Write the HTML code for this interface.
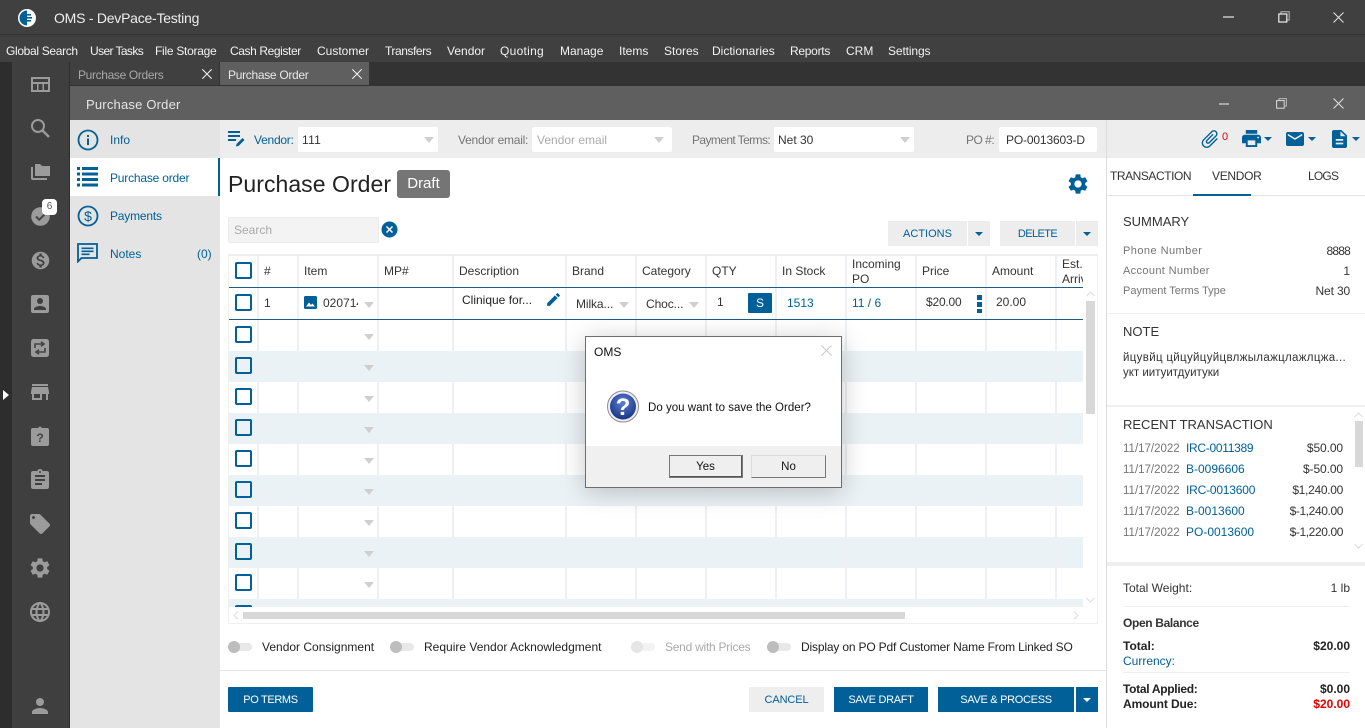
<!DOCTYPE html>
<html><head><meta charset="utf-8"><style>
html,body{margin:0;padding:0;width:1365px;height:728px;overflow:hidden;background:#fff}
body{position:relative;font-family:"Liberation Sans","Noto Sans CJK SC",sans-serif;font-size:12px;color:#333}
.b,.t,svg.i{position:absolute}
.t{white-space:nowrap;line-height:16px}
.bl{color:#006097}
.g{color:#757575}
.r{text-align:right}
.m{color:#f2f2f2;top:43px}
.ck{position:absolute;left:235px;width:13px;height:13px;border:2.5px solid #006097;border-radius:2px;background:transparent}
.car{position:absolute;width:0;height:0;border-left:5px solid transparent;border-right:5px solid transparent;border-top:6px solid #cfcfcf;margin:1px 0 0 1px}
.wc{position:absolute;width:0;height:0;border-left:4px solid transparent;border-right:4px solid transparent;border-top:4px solid #fff}
.bc{position:absolute;width:0;height:0;border-left:4px solid transparent;border-right:4px solid transparent;border-top:4px solid #006097}
.st{position:absolute;left:229px;width:854px;height:31px;background:#ebf2f6}
.cl{position:absolute;top:255px;width:2px;height:352px;background:#edf1f3}
.tr{position:absolute;height:8px;width:19px;background:#e8e8e8;border-radius:4px}
.kn{position:absolute;width:12px;height:12px;border-radius:6px;background:#bdbdbd}
.sb{fill:#9b9b9b}
.btn{line-height:26px;text-align:center;font-size:11px}
</style></head><body>
<svg width="0" height="0" style="position:absolute"><defs>
<symbol id="dollar" viewBox="0 0 24 24"><path d="M12 2C6.48 2 2 6.48 2 12s4.48 10 10 10 10-4.48 10-10S17.52 2 12 2zm1.41 16.09V20h-2.67v-1.93c-1.71-.36-3.16-1.46-3.27-3.4h1.96c.1 1.05.82 1.87 2.65 1.87 1.96 0 2.4-.98 2.4-1.59 0-.83-.44-1.61-2.67-2.14-2.48-.6-4.18-1.62-4.18-3.67 0-1.72 1.39-2.84 3.11-3.21V4h2.67v1.95c1.86.45 2.79 1.86 2.85 3.39H14.3c-.05-1.11-.64-1.87-2.22-1.87-1.5 0-2.4.68-2.4 1.64 0 .84.65 1.39 2.67 1.91s4.18 1.39 4.18 3.91c-.01 1.83-1.38 2.83-3.12 3.16z"/></symbol>
<symbol id="gear" viewBox="0 0 24 24"><path d="M19.14 12.94c.04-.3.06-.61.06-.94 0-.32-.02-.64-.07-.94l2.03-1.58c.18-.14.23-.41.12-.61l-1.92-3.32c-.12-.22-.37-.29-.59-.22l-2.39.96c-.5-.38-1.03-.7-1.62-.94l-.36-2.54c-.04-.24-.24-.41-.48-.41h-3.84c-.24 0-.43.17-.47.41l-.36 2.54c-.59.24-1.13.57-1.62.94l-2.39-.96c-.22-.08-.47 0-.59.22L2.74 8.87c-.12.21-.08.47.12.61l2.03 1.58c-.05.3-.09.63-.09.94s.02.64.07.94l-2.03 1.58c-.18.14-.23.41-.12.61l1.92 3.32c.12.22.37.29.59.22l2.39-.96c.5.38 1.03.7 1.62.94l.36 2.54c.05.24.24.41.48.41h3.84c.24 0 .44-.17.47-.41l.36-2.54c.59-.24 1.13-.56 1.62-.94l2.39.96c.22.08.47 0 .59-.22l1.92-3.32c.12-.22.07-.47-.12-.61l-2.01-1.58zM12 15.6c-1.98 0-3.6-1.62-3.6-3.6s1.62-3.6 3.6-3.6 3.6 1.62 3.6 3.6-1.62 3.6-3.6 3.6z"/></symbol>
<symbol id="edit" viewBox="0 0 24 24"><path d="M3 17.25V21h3.75L17.81 9.94l-3.75-3.75L3 17.25zM20.71 7.04c.39-.39.39-1.02 0-1.41l-2.34-2.34c-.39-.39-1.02-.39-1.41 0l-1.83 1.83 3.75 3.75 1.83-1.83z"/></symbol>
</defs></svg>

<!-- chrome -->
<div class="b" style="left:0;top:0;width:1365px;height:62px;background:#404040"></div>
<div class="b" style="left:0;top:34px;width:1365px;height:1px;background:#353535"></div>
<div class="b" style="left:0;top:62px;width:1365px;height:24px;background:#333"></div>
<div class="b" style="left:0;top:62px;width:12px;height:666px;background:#2d2d2d"></div>
<div class="b" style="left:12px;top:62px;width:57px;height:666px;background:#3f3f3f"></div>
<div class="b" style="left:69px;top:62px;width:1px;height:666px;background:#2e2e2e"></div>
<svg class="i" style="left:18px;top:9px" width="18" height="18" viewBox="0 0 18 18"><circle cx="9" cy="9" r="9" fill="#fff"/><path d="M9 1.5A7.5 7.5 0 0 0 9 16.5Z" fill="#006097"/><rect x="6" y="5" width="7" height="1.6" fill="#006097"/><rect x="5" y="8" width="9" height="1.6" fill="#006097"/><rect x="6" y="11" width="7" height="1.6" fill="#006097"/></svg>
<div class="t" style="left:54px;top:10px;font-size:14px;color:#eee;letter-spacing:-.24px">OMS - DevPace-Testing</div>
<div class="b" style="left:1223px;top:16px;width:11px;height:2px;background:#a5a5a5"></div>
<svg class="i" style="left:1278px;top:11px" width="12" height="12" viewBox="0 0 12 12" fill="none"><path d="M3 2.5V.8h8.2V9H9" stroke="#bbb"/><rect x=".8" y="3" width="8" height="8" stroke="#eee" stroke-width="1.2"/></svg>
<svg class="i" style="left:1333px;top:12px" width="11" height="11" viewBox="0 0 11 11"><path d="M.5.5l10 10M10.5.5l-10 10" stroke="#ddd" stroke-width="1.1"/></svg>
<div class="t m" style="left:6px;letter-spacing:-.33px">Global Search</div>
<div class="t m" style="left:90px;letter-spacing:-.6px">User Tasks</div>
<div class="t m" style="left:155px;letter-spacing:-.27px">File Storage</div>
<div class="t m" style="left:230px;letter-spacing:-.4px">Cash Register</div>
<div class="t m" style="left:317px">Customer</div>
<div class="t m" style="left:385px;letter-spacing:-.45px">Transfers</div>
<div class="t m" style="left:447px">Vendor</div>
<div class="t m" style="left:500px;letter-spacing:.28px">Quoting</div>
<div class="t m" style="left:560px">Manage</div>
<div class="t m" style="left:619px">Items</div>
<div class="t m" style="left:664px">Stores</div>
<div class="t m" style="left:712px">Dictionaries</div>
<div class="t m" style="left:790px;letter-spacing:-.28px">Reports</div>
<div class="t m" style="left:846px">CRM</div>
<div class="t m" style="left:888px;letter-spacing:-.12px">Settings</div>

<!-- tabs -->
<div class="b" style="left:70px;top:62px;width:149px;height:23px;background:#404040"></div>
<div class="b" style="left:220px;top:62px;width:149px;height:23px;background:#5f5f5f"></div>
<div class="t" style="left:78px;top:67px;color:#a8a8a8;letter-spacing:-.35px">Purchase Orders</div>
<div class="t" style="left:228px;top:67px;color:#e8e8e8;letter-spacing:-.3px">Purchase Order</div>
<svg class="i" style="left:202px;top:69px" width="10" height="10" viewBox="0 0 10 10"><path d="M.3.3l9.4 9.4M9.7.3L.3 9.7" stroke="#eee" stroke-width="1.1"/></svg>
<svg class="i" style="left:352px;top:69px" width="10" height="10" viewBox="0 0 10 10"><path d="M.3.3l9.4 9.4M9.7.3L.3 9.7" stroke="#eee" stroke-width="1.1"/></svg>
<div class="b" style="left:70px;top:86px;width:1295px;height:34px;background:#5f5f5f"></div>
<div class="t" style="left:86px;top:97px;font-size:13px;color:#e6e6e6;letter-spacing:.2px">Purchase Order</div>
<div class="b" style="left:1219px;top:103px;width:10px;height:1.5px;background:#a8a8a8"></div>
<svg class="i" style="left:1276px;top:98px" width="11" height="11" viewBox="0 0 11 11" fill="none"><path d="M3 2V.6h7.4V8H9" stroke="#bbb"/><rect x=".6" y="2.6" width="7.6" height="7.6" stroke="#ddd"/></svg>
<svg class="i" style="left:1333px;top:98px" width="11" height="11" viewBox="0 0 11 11"><path d="M.5.5l10 10M10.5.5l-10 10" stroke="#ddd" stroke-width="1.1"/></svg>

<!-- sidebar icons -->
<svg class="i sb" style="left:31px;top:77px" width="19" height="15" viewBox="0 0 19 15"><path fill-rule="evenodd" d="M0 0h19v15H0zM2 2v3h15V2zM2 7v6h4V7zM7.5 7v6h4V7zM13 7v6h4V7z"/></svg>
<svg class="i sb" style="left:30px;top:118px" width="22" height="20" viewBox="0 0 22 20"><circle cx="8" cy="8" r="6" fill="none" stroke="#9b9b9b" stroke-width="2"/><path d="M12.5 12.5l6.5 6.5" stroke="#9b9b9b" stroke-width="2.4"/></svg>
<svg class="i sb" style="left:31px;top:164px" width="19" height="16" viewBox="0 0 19 16"><path d="M4 0h5l2 2h8v10H4zM0 3h2v11h14v2H2q-2 0-2-2z"/></svg>
<svg class="i" style="left:31px;top:207px" width="19" height="19" viewBox="0 0 19 19"><circle cx="9.5" cy="9.5" r="9.3" fill="#9b9b9b"/><path d="M5 9.5l3.2 3.2L14 7" fill="none" stroke="#444" stroke-width="2"/></svg>
<div class="b" style="left:42px;top:199px;width:15px;height:16px;background:#fff;border-radius:4px;color:#555;font-size:10px;line-height:16px;text-align:center">6</div>
<svg class="i sb" style="left:30px;top:250px" width="21" height="21" viewBox="0 0 24 24"><use href="#dollar"/></svg>
<svg class="i sb" style="left:28px;top:292px" width="24" height="24" viewBox="0 0 24 24"><path d="M3 5v14c0 1.1.89 2 2 2h14c1.1 0 2-.9 2-2V5c0-1.1-.9-2-2-2H5c-1.11 0-2 .9-2 2zm12 4c0 1.66-1.34 3-3 3s-3-1.34-3-3 1.34-3 3-3 3 1.34 3 3zm-9 8c0-2 4-3.1 6-3.1s6 1.1 6 3.1v1H6v-1z"/></svg>
<svg class="i" style="left:31px;top:339px" width="18" height="18" viewBox="0 0 18 18"><rect width="18" height="18" rx="2.5" fill="#9b9b9b"/><path d="M4 9V5h8M10 2.8l3 2.2-3 2.2M14 9v4H6M8 15.2L5 13l3-2.2" fill="none" stroke="#444" stroke-width="1.6"/></svg>
<svg class="i sb" style="left:28px;top:380px" width="24" height="24" viewBox="0 0 24 24"><path d="M20 4H4v2h16V4zm1 10v-2l-1-5H4l-1 5v2h1v6h10v-6h4v6h2v-6h1zm-9 4H6v-4h6v4z"/></svg>
<svg class="i" style="left:31px;top:425px" width="18" height="21" viewBox="0 0 18 21"><path d="M2 3h5q2-3 4 0h5q2 0 2 2v14q0 2-2 2H2q-2 0-2-2V5q0-2 2-2z" fill="#9b9b9b"/><text x="9" y="17" font-size="12" font-weight="bold" text-anchor="middle" fill="#444" font-family="Liberation Sans">?</text></svg>
<svg class="i sb" style="left:28px;top:468px" width="24" height="24" viewBox="0 0 24 24"><path d="M19 3h-4.18C14.4 1.84 13.3 1 12 1c-1.3 0-2.4.84-2.82 2H5c-1.1 0-2 .9-2 2v14c0 1.1.9 2 2 2h14c1.1 0 2-.9 2-2V5c0-1.1-.9-2-2-2zm-7 0c.55 0 1 .45 1 1s-.45 1-1 1-1-.45-1-1 .45-1 1-1zm2 14H7v-2h7v2zm3-4H7v-2h10v2zm0-4H7V7h10v2z"/></svg>
<svg class="i sb" style="left:28px;top:512px" width="24" height="24" viewBox="0 0 24 24"><path d="M21.41 11.58l-9-9C12.05 2.22 11.55 2 11 2H4c-1.1 0-2 .9-2 2v7c0 .55.22 1.05.59 1.42l9 9c.36.36.86.58 1.41.58.55 0 1.05-.22 1.41-.59l7-7c.37-.36.59-.86.59-1.41 0-.55-.23-1.06-.59-1.42zM5.5 7C4.67 7 4 6.33 4 5.5S4.67 4 5.5 4 7 4.67 7 5.5 6.33 7 5.5 7z"/></svg>
<svg class="i sb" style="left:28px;top:556px" width="24" height="24"><use href="#gear"/></svg>
<svg class="i sb" style="left:28px;top:600px" width="24" height="24" viewBox="0 0 24 24"><path d="M11.99 2C6.47 2 2 6.48 2 12s4.47 10 9.99 10C17.52 22 22 17.52 22 12S17.52 2 11.99 2zm6.93 6h-2.95c-.32-1.25-.78-2.45-1.38-3.56 1.84.63 3.37 1.91 4.33 3.56zM12 4.04c.83 1.2 1.48 2.53 1.91 3.96h-3.82c.43-1.43 1.08-2.76 1.91-3.96zM4.26 14C4.1 13.36 4 12.69 4 12s.1-1.36.26-2h3.38c-.08.66-.14 1.32-.14 2 0 .68.06 1.34.14 2H4.26zm.82 2h2.95c.32 1.25.78 2.45 1.38 3.56-1.84-.63-3.37-1.9-4.33-3.56zm2.95-8H5.08c.96-1.66 2.49-2.93 4.33-3.56C8.81 5.55 8.35 6.75 8.03 8zM12 19.96c-.83-1.2-1.48-2.53-1.91-3.96h3.82c-.43 1.43-1.08 2.76-1.91 3.96zM14.34 14H9.66c-.09-.66-.16-1.32-.16-2 0-.68.07-1.35.16-2h4.68c.09.65.16 1.32.16 2 0 .68-.07 1.34-.16 2zm.25 5.56c.6-1.11 1.06-2.31 1.38-3.56h2.95c-.96 1.65-2.49 2.93-4.33 3.56zM16.36 14c.08-.66.14-1.32.14-2 0-.68-.06-1.34-.14-2h3.38c.16.64.26 1.31.26 2s-.1 1.36-.26 2h-3.38z"/></svg>
<svg class="i sb" style="left:28px;top:694px" width="24" height="24" viewBox="0 0 24 24"><path d="M12 12c2.21 0 4-1.79 4-4s-1.79-4-4-4-4 1.79-4 4 1.79 4 4 4zm0 2c-2.67 0-8 1.34-8 4v2h16v-2c0-2.66-5.33-4-8-4z"/></svg>
<div class="b" style="left:3px;top:390px;width:0;height:0;border-top:5px solid transparent;border-bottom:5px solid transparent;border-left:6px solid #fff"></div>

<!-- left nav -->
<div class="b" style="left:70px;top:120px;width:150px;height:608px;background:#e4e4e4"></div>
<div class="b" style="left:70px;top:158px;width:150px;height:38px;background:#fff"></div>
<div class="b" style="left:218px;top:158px;width:2px;height:38px;background:#006097"></div>
<svg class="i" style="left:77px;top:129px" width="22" height="22" viewBox="0 0 22 22" fill="none"><circle cx="11" cy="11" r="9.5" stroke="#006097" stroke-width="1.8"/><rect x="10" y="9.5" width="2" height="6.5" fill="#006097"/><rect x="10" y="6" width="2" height="2" fill="#006097"/></svg>
<svg class="i" style="left:77px;top:167px" width="22" height="20" viewBox="0 0 22 20" fill="#006097"><rect y="0" width="3" height="3"/><rect x="5" y="0" width="16" height="3"/><rect y="5.5" width="3" height="3"/><rect x="5" y="5.5" width="16" height="3"/><rect y="11" width="3" height="3"/><rect x="5" y="11" width="16" height="3"/><rect y="16.5" width="3" height="3"/><rect x="5" y="16.5" width="16" height="3"/></svg>
<svg class="i" style="left:77px;top:205px" width="22" height="22" viewBox="0 0 22 22" fill="none"><circle cx="11" cy="11" r="9.5" stroke="#006097" stroke-width="1.8"/><text x="11" y="16" font-size="14" text-anchor="middle" fill="#006097" font-family="Liberation Sans">$</text></svg>
<svg class="i" style="left:77px;top:243px" width="21" height="20" viewBox="0 0 21 20"><path d="M1 1h19v14H4.5L1 18.5z" fill="none" stroke="#006097" stroke-width="1.8"/><path d="M4.5 4.5h12v1.6h-12zM4.5 7.5h12v1.6h-12zM4.5 10.5h8v1.6h-8z" fill="#006097"/></svg>
<div class="t bl" style="left:110px;top:132px">Info</div>
<div class="t bl" style="left:110px;top:170px;letter-spacing:-.2px">Purchase order</div>
<div class="t bl" style="left:110px;top:208px;letter-spacing:-.2px">Payments</div>
<div class="t bl" style="left:110px;top:246px">Notes</div>
<div class="t bl" style="left:197px;top:246px">(0)</div>

<!-- top bar -->
<div class="b" style="left:220px;top:120px;width:1145px;height:38px;background:#ededed"></div>
<div class="b" style="left:1106px;top:120px;width:1px;height:608px;background:#dcdcdc"></div>
<div class="b" style="left:1107px;top:158px;width:258px;height:570px;background:#fff"></div>
<svg class="i" style="left:228px;top:131px" width="18" height="16" viewBox="0 0 18 16" fill="#006097"><rect width="12" height="2"/><rect y="4" width="12" height="2"/><rect y="8" width="8" height="2"/><path d="M8 15.5l.5-2.5 6-6 2 2-6 6z"/></svg>
<div class="t bl" style="left:254px;top:132px;letter-spacing:-.25px">Vendor:</div>
<div class="b" style="left:298px;top:127px;width:140px;height:25px;background:#fff;border-radius:2px"></div>
<div class="t" style="left:302px;top:132px;letter-spacing:.3px">111</div>
<div class="car" style="left:423px;top:136px"></div>
<div class="t g" style="left:458px;top:132px;letter-spacing:-.25px">Vendor email:</div>
<div class="b" style="left:532px;top:127px;width:140px;height:25px;background:#fff;border-radius:2px"></div>
<div class="t" style="left:537px;top:132px;color:#aaa">Vendor email</div>
<div class="car" style="left:653px;top:136px"></div>
<div class="t g" style="left:692px;top:132px;letter-spacing:-.6px">Payment Terms:</div>
<div class="b" style="left:774px;top:127px;width:140px;height:25px;background:#fff;border-radius:2px"></div>
<div class="t" style="left:778px;top:132px">Net 30</div>
<div class="car" style="left:899px;top:136px"></div>
<div class="t g" style="left:966px;top:132px;letter-spacing:-.5px">PO #:</div>
<div class="b" style="left:999px;top:127px;width:98px;height:25px;background:#fff;border-radius:2px"></div>
<div class="t" style="left:1006px;top:132px;letter-spacing:-.15px">PO-0013603-D</div>

<!-- right toolbar icons -->
<svg class="i" style="left:1199px;top:128px" width="22" height="22" viewBox="0 0 24 24" fill="#006097"><path transform="rotate(45 12 12)" d="M16.5 6v11.5c0 2.21-1.79 4-4 4s-4-1.79-4-4V5c0-1.38 1.12-2.5 2.5-2.5s2.5 1.12 2.5 2.5v10.5c0 .55-.45 1-1 1s-1-.45-1-1V6H10v9.5c0 1.38 1.12 2.5 2.5 2.5s2.5-1.12 2.5-2.5V5c0-2.21-1.79-4-4-4S7 2.79 7 5v12.5c0 3.04 2.46 5.5 5.5 5.5s5.5-2.46 5.5-5.5V6h-1.5z"/></svg>
<div class="t" style="left:1222px;top:129px;color:#e60000;font-size:11px">0</div>
<svg class="i" style="left:1242px;top:130px" width="19" height="17" viewBox="2 3 20 18" preserveAspectRatio="none" fill="#006097"><path d="M19 8H5c-1.66 0-3 1.34-3 3v6h4v4h12v-4h4v-6c0-1.66-1.34-3-3-3zm-3 11H8v-5h8v5zm3-7c-.55 0-1-.45-1-1s.45-1 1-1 1 .45 1 1-.45 1-1 1zm-1-9H6v4h12V3z"/></svg>
<div class="bc" style="left:1264px;top:137px"></div>
<svg class="i" style="left:1286px;top:132px" width="18" height="14" viewBox="2 4 20 16" preserveAspectRatio="none" fill="#006097"><path d="M20 4H4c-1.1 0-1.99.9-1.99 2L2 18c0 1.1.9 2 2 2h16c1.1 0 2-.9 2-2V6c0-1.1-.9-2-2-2zm0 4l-8 5-8-5V6l8 5 8-5v2z"/></svg>
<div class="bc" style="left:1308px;top:137px"></div>
<svg class="i" style="left:1332px;top:130px" width="15" height="18" viewBox="4 2 16 20" preserveAspectRatio="none" fill="#006097"><path d="M14 2H6c-1.1 0-1.99.9-1.99 2L4 20c0 1.1.89 2 1.99 2H18c1.1 0 2-.9 2-2V8l-6-6zm2 16H8v-2h8v2zm0-4H8v-2h8v2zm-3-5V3.5L18.5 9H13z"/></svg>
<div class="bc" style="left:1352px;top:137px"></div>

<!-- heading -->
<div class="t" style="left:228px;top:168px;font-size:23px;line-height:32px;color:#222;letter-spacing:.05px">Purchase Order</div>
<div class="b" style="left:397px;top:170px;width:53px;height:28px;background:#757575;border-radius:3px;color:#fff;font-size:15px;line-height:28px;text-align:center">Draft</div>
<svg class="i" style="left:1066px;top:172px;fill:#006097" width="24" height="24"><use href="#gear"/></svg>
<div class="b" style="left:228px;top:217px;width:149px;height:24px;background:#f3f3f3;border:1px solid #ececec;border-radius:2px"></div>
<div class="t" style="left:234px;top:222px;color:#aaa">Search</div>
<svg class="i" style="left:381px;top:221px" width="17" height="17" viewBox="0 0 17 17"><circle cx="8.5" cy="8.5" r="8" fill="#006097"/><path d="M5.5 5.5l6 6M11.5 5.5l-6 6" stroke="#fff" stroke-width="1.5"/></svg>
<div class="b bl btn" style="left:888px;top:221px;width:79px;height:25px;background:#ededed">ACTIONS</div>
<div class="b" style="left:968px;top:221px;width:22px;height:25px;background:#ededed"></div><div class="bc" style="left:975px;top:232px"></div>
<div class="b bl btn" style="left:1000px;top:221px;width:75px;height:25px;background:#ededed;letter-spacing:-.6px">DELETE</div>
<div class="b" style="left:1076px;top:221px;width:22px;height:25px;background:#ededed"></div><div class="bc" style="left:1083px;top:232px"></div>

<!-- table -->
<div class="b" style="left:228px;top:254px;width:868px;height:367px;border:1px solid #f0f0f0;border-top:2px solid #eee;box-sizing:content-box"></div>
<div class="st" style="top:351px"></div><div class="st" style="top:413px"></div><div class="st" style="top:475px"></div><div class="st" style="top:537px"></div><div class="st" style="top:599px;height:8px"></div>
<div class="cl" style="left:257px"></div><div class="cl" style="left:297px"></div><div class="cl" style="left:377px"></div><div class="cl" style="left:452px"></div><div class="cl" style="left:565px"></div><div class="cl" style="left:635px"></div><div class="cl" style="left:705px"></div><div class="cl" style="left:775px"></div><div class="cl" style="left:845px"></div><div class="cl" style="left:915px"></div><div class="cl" style="left:985px"></div><div class="cl" style="left:1055px"></div>
<div class="b" style="left:229px;top:287px;width:854px;height:1px;background:#1d5c85"></div>
<div class="b" style="left:229px;top:319px;width:854px;height:1px;background:#1d5c85"></div>
<div class="ck" style="top:262px"></div><div class="ck" style="top:294px"></div><div class="ck" style="top:326px"></div><div class="ck" style="top:357px"></div><div class="ck" style="top:388px"></div><div class="ck" style="top:419px"></div><div class="ck" style="top:450px"></div><div class="ck" style="top:481px"></div><div class="ck" style="top:512px"></div><div class="ck" style="top:543px"></div><div class="ck" style="top:574px"></div><div class="ck" style="top:605px;height:2px;border-bottom:0"></div>
<div class="t" style="left:264px;top:263px">#</div>
<div class="t" style="left:304px;top:263px">Item</div>
<div class="t" style="left:384px;top:263px">MP#</div>
<div class="t" style="left:459px;top:263px">Description</div>
<div class="t" style="left:572px;top:263px">Brand</div>
<div class="t" style="left:642px;top:263px">Category</div>
<div class="t" style="left:712px;top:263px">QTY</div>
<div class="t" style="left:782px;top:263px">In Stock</div>
<div class="t" style="left:852px;top:257px;line-height:14.5px">Incoming<br>PO</div>
<div class="t" style="left:922px;top:263px">Price</div>
<div class="t" style="left:992px;top:263px">Amount</div>
<div class="t" style="left:1062px;top:257px;line-height:14.5px;width:21px;overflow:hidden">Est.<br>Arrival</div>
<div class="t" style="left:264px;top:295px">1</div>
<svg class="i" style="left:304px;top:296px" width="13" height="13" viewBox="0 0 13 13"><rect width="13" height="13" rx="1.5" fill="#006097"/><path d="M2 10.5L5 6.5l2 2.5 1.5-1.5 2.5 3z" fill="#fff"/></svg>
<div class="t" style="left:323px;top:295px;width:35px;overflow:hidden">020714</div>
<div class="t" style="left:462px;top:292px;color:#222">Clinique for...</div>
<svg class="i" style="left:545px;top:291px;fill:#006097" width="17" height="17" viewBox="0 0 24 24"><use href="#edit"/></svg>
<div class="t" style="left:576px;top:296px;letter-spacing:-.1px">Milka...</div>
<div class="t" style="left:646px;top:296px;letter-spacing:-.1px">Choc...</div>
<div class="t" style="left:717px;top:294px">1</div>
<div class="b" style="left:748px;top:293px;width:24px;height:20px;background:#006097;border-radius:1px;color:#fff;text-align:center;line-height:20px">S</div>
<div class="t bl" style="left:787px;top:295px">1513</div>
<div class="t bl" style="left:852px;top:295px">11 / 6</div>
<div class="t" style="left:926px;top:294px;letter-spacing:-.2px">$20.00</div>
<div class="b" style="left:977px;top:295px;width:5px;height:5px;background:#006097"></div><div class="b" style="left:977px;top:302px;width:5px;height:5px;background:#006097"></div><div class="b" style="left:977px;top:309px;width:5px;height:4px;background:#006097"></div>
<div class="t" style="left:996px;top:294px">20.00</div>
<div class="car" style="left:363px;top:301px"></div><div class="car" style="left:618px;top:301px"></div><div class="car" style="left:688px;top:301px"></div>
<div class="car" style="left:363px;top:333px"></div><div class="car" style="left:363px;top:364px"></div><div class="car" style="left:363px;top:395px"></div><div class="car" style="left:363px;top:426px"></div><div class="car" style="left:363px;top:457px"></div><div class="car" style="left:363px;top:488px"></div><div class="car" style="left:363px;top:519px"></div><div class="car" style="left:363px;top:550px"></div><div class="car" style="left:363px;top:581px"></div>
<!-- scrollbars -->
<div class="b" style="left:229px;top:607px;width:867px;height:15px;background:#fff"></div>
<div class="b" style="left:243px;top:612px;width:662px;height:7px;background:#d8d8d8"></div>
<div class="b" style="left:1086px;top:301px;width:9px;height:113px;background:#d8d8d8"></div>
<svg class="i" style="left:233px;top:611px" width="6" height="9" viewBox="0 0 6 9"><path d="M5 .5L1 4.5l4 4" fill="none" stroke="#ddd"/></svg>
<svg class="i" style="left:1073px;top:611px" width="6" height="9" viewBox="0 0 6 9"><path d="M1 .5l4 4-4 4" fill="none" stroke="#ddd"/></svg>
<svg class="i" style="left:1086px;top:291px" width="9" height="6" viewBox="0 0 9 6"><path d="M.5 5l4-4 4 4" fill="none" stroke="#ddd"/></svg>
<svg class="i" style="left:1086px;top:597px" width="9" height="6" viewBox="0 0 9 6"><path d="M.5 1l4 4 4-4" fill="none" stroke="#ddd"/></svg>

<!-- toggles -->
<div class="tr" style="left:233px;top:643px"></div><div class="kn" style="left:228px;top:641px"></div>
<div class="t" style="left:262px;top:639px;color:#222">Vendor Consignment</div>
<div class="tr" style="left:395px;top:643px"></div><div class="kn" style="left:390px;top:641px"></div>
<div class="t" style="left:424px;top:639px;color:#222">Require Vendor Acknowledgment</div>
<div class="tr" style="left:636px;top:643px;background:#f2f2f2"></div><div class="kn" style="left:631px;top:641px;background:#e5e5e5"></div>
<div class="t" style="left:665px;top:639px;color:#aaa;letter-spacing:-.25px">Send with Prices</div>
<div class="tr" style="left:772px;top:643px"></div><div class="kn" style="left:767px;top:641px"></div>
<div class="t" style="left:801px;top:639px;color:#222;letter-spacing:-.17px">Display on PO Pdf Customer Name From Linked SO</div>
<div class="b" style="left:220px;top:670px;width:886px;height:1px;background:#e5e5e5"></div>

<!-- buttons -->
<div class="b btn" style="left:228px;top:687px;width:85px;height:25px;background:#006097;color:#fff;border-radius:1px;letter-spacing:-.35px">PO TERMS</div>
<div class="b bl btn" style="left:749px;top:687px;width:75px;height:25px;background:#eee;letter-spacing:-.1px">CANCEL</div>
<div class="b btn" style="left:834px;top:687px;width:94px;height:25px;background:#006097;color:#fff;letter-spacing:-.3px">SAVE DRAFT</div>
<div class="b btn" style="left:938px;top:687px;width:136px;height:25px;background:#006097;color:#fff;letter-spacing:-.3px">SAVE &amp; PROCESS</div>
<div class="b" style="left:1076px;top:687px;width:22px;height:25px;background:#006097"></div><div class="wc" style="left:1083px;top:698px"></div>

<!-- right panel -->
<div class="t" style="left:1110px;top:168px;color:#333;letter-spacing:-.45px">TRANSACTION</div>
<div class="t" style="left:1212px;top:168px;color:#333;letter-spacing:-.3px">VENDOR</div>
<div class="t" style="left:1308px;top:168px;color:#333;letter-spacing:-.8px">LOGS</div>
<div class="b" style="left:1107px;top:195px;width:258px;height:1px;background:#e5e5e5"></div>
<div class="b" style="left:1193px;top:194px;width:58px;height:2px;background:#006097"></div>
<div class="t" style="left:1123px;top:214px;font-size:13px;color:#333">SUMMARY</div>
<div class="t g" style="left:1123px;top:243px;font-size:11px;letter-spacing:.45px">Phone Number</div><div class="t" style="right:15px;top:243px;letter-spacing:-.8px">8888</div>
<div class="t g" style="left:1123px;top:263px;font-size:11px;letter-spacing:.35px">Account Number</div><div class="t" style="right:15px;top:263px">1</div>
<div class="t g" style="left:1123px;top:283px;font-size:11px">Payment Terms Type</div><div class="t" style="right:15px;top:283px;letter-spacing:-.15px">Net 30</div>
<div class="b" style="left:1107px;top:313px;width:258px;height:1px;background:#eee"></div>
<div class="t" style="left:1123px;top:324px;font-size:13px">NOTE</div>
<div class="t" style="left:1123px;top:350px;width:226px;overflow:hidden;font-size:11.5px;letter-spacing:.33px">йцувйц цйцуйцуйцвлжылажцлажлцжа...</div>
<div class="t" style="left:1123px;top:365px;font-size:11.5px">укт иитуитдуитуки</div>
<div class="b" style="left:1107px;top:405px;width:258px;height:2px;background:#f0f0f0"></div>
<div class="t" style="left:1123px;top:417px;font-size:13px">RECENT TRANSACTION</div>
<div class="t g" style="left:1123px;top:441px;font-size:11.5px">11/17/2022</div><div class="t bl" style="left:1186px;top:440px;letter-spacing:-.3px">IRC-0011389</div><div class="t" style="right:22px;top:440px;letter-spacing:-.1px">$50.00</div>
<div class="t g" style="left:1123px;top:462px;font-size:11.5px">11/17/2022</div><div class="t bl" style="left:1186px;top:461px">B-0096606</div><div class="t" style="right:22px;top:461px;letter-spacing:-.1px">$-50.00</div>
<div class="t g" style="left:1123px;top:483px;font-size:11.5px">11/17/2022</div><div class="t bl" style="left:1186px;top:482px;letter-spacing:-.2px">IRC-0013600</div><div class="t" style="right:22px;top:482px;letter-spacing:-.3px">$1,240.00</div>
<div class="t g" style="left:1123px;top:504px;font-size:11.5px">11/17/2022</div><div class="t bl" style="left:1186px;top:503px">B-0013600</div><div class="t" style="right:22px;top:503px;letter-spacing:-.4px">$-1,240.00</div>
<div class="t g" style="left:1123px;top:525px;font-size:11.5px">11/17/2022</div><div class="t bl" style="left:1186px;top:524px">PO-0013600</div><div class="t" style="right:22px;top:524px;letter-spacing:-.4px">$-1,220.00</div>
<div class="b" style="left:1355px;top:421px;width:8px;height:46px;background:#d8d8d8"></div>
<svg class="i" style="left:1354px;top:412px" width="9" height="6" viewBox="0 0 9 6"><path d="M.5 5l4-4 4 4" fill="none" stroke="#ddd"/></svg>
<svg class="i" style="left:1354px;top:543px" width="9" height="6" viewBox="0 0 9 6"><path d="M.5 1l4 4 4-4" fill="none" stroke="#ddd"/></svg>
<div class="b" style="left:1107px;top:562px;width:258px;height:4px;background:#eee"></div>
<div class="t" style="left:1123px;top:580px">Total Weight:</div><div class="t" style="right:15px;top:580px">1 lb</div>
<div class="b" style="left:1123px;top:606px;width:227px;height:1px;background:#eee"></div>
<div class="t" style="left:1123px;top:615px;font-weight:bold;color:#333;letter-spacing:-.35px">Open Balance</div>
<div class="t" style="left:1123px;top:638px;font-weight:bold;color:#222">Total:</div><div class="t" style="right:15px;top:638px;font-weight:bold;color:#222">$20.00</div>
<div class="t bl" style="left:1123px;top:653px">Currency:</div>
<div class="b" style="left:1123px;top:672px;width:227px;height:1px;background:#eee"></div>
<div class="t" style="left:1123px;top:681px;font-weight:bold;color:#222;letter-spacing:-.3px">Total Applied:</div><div class="t" style="right:15px;top:681px;font-weight:bold;color:#222">$0.00</div>
<div class="t" style="left:1123px;top:696px;font-weight:bold;color:#222;letter-spacing:-.1px">Amount Due:</div><div class="t" style="right:15px;top:696px;font-weight:bold;color:#e60000">$20.00</div>

<!-- dialog -->
<div class="b" style="left:585px;top:336px;width:255px;height:150px;background:#fff;border:1px solid #6d6d6d;box-shadow:0 4px 24px rgba(0,0,0,.22)"></div>
<div class="b" style="left:586px;top:446px;width:255px;height:41px;background:#f0f0f0"></div>
<div class="t" style="left:594px;top:344px;color:#111">OMS</div>
<svg class="i" style="left:821px;top:345px" width="11" height="11" viewBox="0 0 11 11"><path d="M.5.5l10 10M10.5.5l-10 10" stroke="#c8c8c8"/></svg>
<svg class="i" style="left:607px;top:390px" width="32" height="33" viewBox="0 0 32 33"><defs><radialGradient id="qg" cx=".5" cy=".35" r=".7"><stop offset="0" stop-color="#5c7fd6"/><stop offset="1" stop-color="#14307f"/></radialGradient></defs><circle cx="16" cy="16.5" r="15.5" fill="#eef" stroke="#8d8d8d"/><circle cx="16" cy="16.5" r="13" fill="url(#qg)"/><text x="16" y="25" font-size="24" font-weight="bold" text-anchor="middle" fill="#fff" font-family="Liberation Sans">?</text></svg>
<div class="t" style="left:648px;top:400px;color:#111;font-size:11.5px;letter-spacing:.02px">Do you want to save the Order?</div>
<div class="b" style="left:669px;top:455px;width:71px;height:20px;background:#efefef;border:1px solid #fff;border-right:2px solid #555;border-bottom:2px solid #555;outline:1px solid #777;outline-offset:-1px;text-align:center;line-height:22px;color:#111;font-size:11.5px">Yes</div>
<div class="b" style="left:751px;top:455px;width:73px;height:21px;background:#efefef;border-right:1px solid #777;border-bottom:1px solid #777;border-top:1px solid #ddd;border-left:1px solid #ddd;text-align:center;line-height:22px;color:#111;font-size:11.5px">No</div>
</body></html>
